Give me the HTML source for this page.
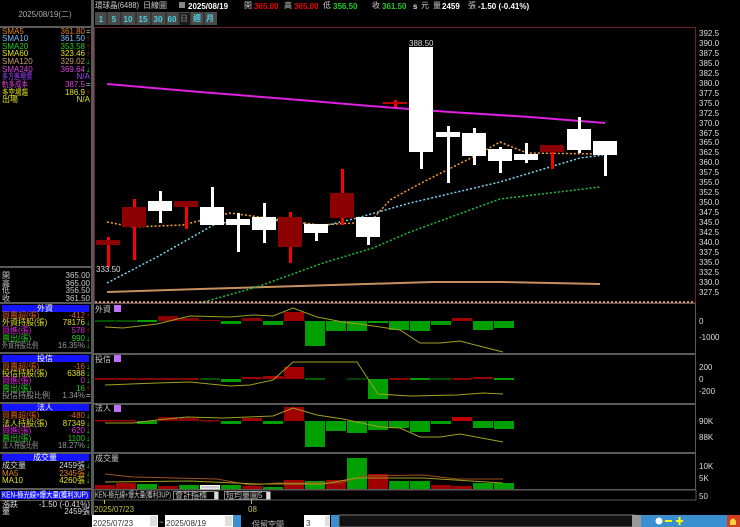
<!DOCTYPE html>
<html><head><meta charset="utf-8"><style>
html,body{margin:0;padding:0;background:#000;width:740px;height:527px;overflow:hidden}
svg{display:block}
text{font-family:"Liberation Sans","Noto Sans CJK TC",sans-serif;font-size:8px}
</style></head><body>
<svg width="740" height="527" viewBox="0 0 740 527" xmlns="http://www.w3.org/2000/svg">
<rect width="740" height="527" fill="#000"/>
<rect x="91" y="0" width="3" height="515" fill="#5a5a5a"/>
<rect x="0" y="26" width="91" height="2" fill="#5a5a5a"/>
<text x="45" y="17" fill="#aaa" text-anchor="middle" font-size="7">2025/08/19(二)</text>
<g font-size="6.5">
<text x="2" y="34" fill="#e08020">SMA5</text><text x="85" y="34" fill="#e08020" text-anchor="end">361.80</text><text x="86" y="34" fill="#ccc">=</text>
<text x="2" y="41" fill="#7ac0ff">SMA10</text><text x="85" y="41" fill="#7ac0ff" text-anchor="end">361.50</text><text x="86" y="41" fill="#f00">↑</text>
<text x="2" y="49" fill="#2c2">SMA20</text><text x="85" y="49" fill="#2c2" text-anchor="end">353.58</text><text x="86" y="49" fill="#f00">↑</text>
<text x="2" y="56" fill="#e0e020">SMA60</text><text x="85" y="56" fill="#e0e020" text-anchor="end">323.46</text><text x="86" y="56" fill="#f00">↑</text>
<text x="2" y="64" fill="#c8a070">SMA120</text><text x="85" y="64" fill="#c8a070" text-anchor="end">329.02</text><text x="86" y="64" fill="#0f0">↓</text>
<text x="2" y="72" fill="#e040e0">SMA240</text><text x="85" y="72" fill="#e040e0" text-anchor="end">369.64</text><text x="86" y="72" fill="#0f0">↓</text>
<text x="2" y="79" fill="#a040ff" font-size="6" textLength="30" lengthAdjust="spacingAndGlyphs">多方進場價</text><text x="90" y="79" fill="#a040ff" text-anchor="end">N/A</text>
<text x="2" y="87" fill="#e040e0" font-size="6" textLength="26" lengthAdjust="spacingAndGlyphs">軌多成本</text><text x="85" y="87" fill="#e040e0" text-anchor="end">387.5</text><text x="86" y="87" fill="#ccc">=</text>
<text x="2" y="95" fill="#e0e020" font-size="6" textLength="26" lengthAdjust="spacingAndGlyphs">多空場趨</text><text x="85" y="95" fill="#e0e020" text-anchor="end">186.9</text><text x="86" y="95" fill="#f00">↑</text>
<text x="2" y="102" fill="#e0e020" font-size="6">出場</text><text x="90" y="102" fill="#e0e020" text-anchor="end">N/A</text>
</g>
<rect x="0" y="266" width="91" height="2" fill="#5a5a5a"/>
<g fill="#ccc" font-size="6.5">
<text x="2" y="278">開</text><text x="90" y="278" text-anchor="end">365.00</text>
<text x="2" y="286">高</text><text x="90" y="286" text-anchor="end">365.00</text>
<text x="2" y="293">低</text><text x="90" y="293" text-anchor="end">356.50</text>
<text x="2" y="301">收</text><text x="90" y="301" text-anchor="end">361.50</text>
</g>
<g>
<rect x="0" y="302" width="91" height="2" fill="#5a5a5a"/>
<rect x="2" y="305" width="87" height="7" fill="#1414ff"/><text x="45" y="311" fill="#fff" text-anchor="middle" font-size="6">外資</text>
<rect x="0" y="352" width="91" height="2" fill="#5a5a5a"/>
<rect x="2" y="355" width="87" height="7" fill="#1414ff"/><text x="45" y="361" fill="#fff" text-anchor="middle" font-size="6">投信</text>
<rect x="0" y="402" width="91" height="2" fill="#5a5a5a"/>
<rect x="2" y="404" width="87" height="7" fill="#1414ff"/><text x="45" y="410" fill="#fff" text-anchor="middle" font-size="6">法人</text>
<rect x="0" y="452" width="91" height="2" fill="#5a5a5a"/>
<rect x="2" y="454" width="87" height="7" fill="#1414ff"/><text x="45" y="460" fill="#fff" text-anchor="middle" font-size="6">成交量</text>
<rect x="0" y="488" width="91" height="2" fill="#5a5a5a"/>
<rect x="1" y="491" width="89" height="8" fill="#1414ff"/><text x="2" y="497.5" fill="#fff" font-size="5.5" textLength="86" lengthAdjust="spacingAndGlyphs">KEN-極光線+爆大量(獲利3UP)</text>
<rect x="0" y="500" width="91" height="1" fill="#5a5a5a"/>
</g>
<g font-size="6">
<text x="2" y="318" fill="#e06020">買賣超(張)</text><text x="85" y="318" fill="#e06020" text-anchor="end">-412</text><text x="86" y="318" fill="#f00">↑</text>
<text x="2" y="325" fill="#e0e020">外資持股(張)</text><text x="85" y="325" fill="#e0e020" text-anchor="end">78176</text><text x="86" y="325" fill="#0f0">↓</text>
<text x="2" y="333" fill="#e020e0">買進(張)</text><text x="85" y="333" fill="#e020e0" text-anchor="end">578</text><text x="86" y="333" fill="#f00">↑</text>
<text x="2" y="341" fill="#2c2">賣出(張)</text><text x="85" y="341" fill="#2c2" text-anchor="end">990</text><text x="86" y="341" fill="#0f0">↓</text>
<text x="2" y="348" fill="#999" textLength="36" lengthAdjust="spacingAndGlyphs">外資持股比例</text><text x="85" y="348" fill="#999" text-anchor="end">16.35%</text><text x="86" y="348" fill="#0f0">↓</text>

<text x="2" y="369" fill="#e06020">買賣超(張)</text><text x="85" y="369" fill="#e06020" text-anchor="end">-16</text><text x="86" y="369" fill="#0f0">↓</text>
<text x="2" y="376" fill="#e0e020">投信持股(張)</text><text x="85" y="376" fill="#e0e020" text-anchor="end">6388</text><text x="86" y="376" fill="#0f0">↓</text>
<text x="2" y="383" fill="#e020e0">買進(張)</text><text x="85" y="383" fill="#e020e0" text-anchor="end">0</text><text x="86" y="383" fill="#0f0">↓</text>
<text x="2" y="391" fill="#2c2">賣出(張)</text><text x="85" y="391" fill="#2c2" text-anchor="end">16</text><text x="86" y="391" fill="#f00">↑</text>
<text x="2" y="398" fill="#999">投信持股比例</text><text x="85" y="398" fill="#999" text-anchor="end">1.34%</text><text x="86" y="398" fill="#ccc">=</text>

<text x="2" y="418" fill="#e06020">買賣超(張)</text><text x="85" y="418" fill="#e06020" text-anchor="end">-480</text><text x="86" y="418" fill="#0f0">↓</text>
<text x="2" y="426" fill="#e0e020">法人持股(張)</text><text x="85" y="426" fill="#e0e020" text-anchor="end">87349</text><text x="86" y="426" fill="#0f0">↓</text>
<text x="2" y="433" fill="#e020e0">買進(張)</text><text x="85" y="433" fill="#e020e0" text-anchor="end">620</text><text x="86" y="433" fill="#0f0">↓</text>
<text x="2" y="441" fill="#2c2">賣出(張)</text><text x="85" y="441" fill="#2c2" text-anchor="end">1100</text><text x="86" y="441" fill="#0f0">↓</text>
<text x="2" y="448" fill="#999" textLength="36" lengthAdjust="spacingAndGlyphs">法人持股比例</text><text x="85" y="448" fill="#999" text-anchor="end">18.27%</text><text x="86" y="448" fill="#0f0">↓</text>

<text x="2" y="468" fill="#ddd">成交量</text><text x="85" y="468" fill="#ddd" text-anchor="end">2459張</text><text x="86" y="468" fill="#0f0">↓</text>
<text x="2" y="476" fill="#e08020">MA5</text><text x="85" y="476" fill="#e08020" text-anchor="end">2345張</text><text x="86" y="476" fill="#0f0">↓</text>
<text x="2" y="483" fill="#e0e020">MA10</text><text x="85" y="483" fill="#e0e020" text-anchor="end">4260張</text><text x="86" y="483" fill="#0f0">↓</text>

<text x="2" y="507" fill="#ddd">漲跌</text><text x="90" y="507" fill="#ddd" text-anchor="end">-1.50 (-0.41%)</text>
<text x="2" y="514" fill="#ddd">量</text><text x="90" y="514" fill="#ddd" text-anchor="end">2459張</text>
</g>

<text x="95" y="8" fill="#ccc" font-size="6.5" textLength="44" lengthAdjust="spacingAndGlyphs">環球晶(6488)</text>
<text x="143" y="8" fill="#ccc" font-size="6.5">日線圖</text>
<rect x="179" y="2" width="6" height="6" fill="#888"/>
<text x="188" y="9" fill="#fff" font-size="9" font-weight="bold">2025/08/19</text>
<text x="244" y="8" fill="#ccc" font-size="6.5">開</text><text x="254" y="9" fill="#e00" font-size="9" font-weight="bold">365.00</text>
<text x="284" y="8" fill="#ccc" font-size="6.5">高</text><text x="294" y="9" fill="#e00" font-size="9" font-weight="bold">365.00</text>
<text x="323" y="8" fill="#ccc" font-size="6.5">低</text><text x="333" y="9" fill="#2c2" font-size="9" font-weight="bold">356.50</text>
<text x="372" y="8" fill="#ccc" font-size="6.5">收</text><text x="382" y="9" fill="#2c2" font-size="9" font-weight="bold">361.50</text>
<text x="413" y="9" fill="#ddd" font-size="8" font-weight="bold">s</text><text x="421" y="8" fill="#ccc" font-size="6.5">元</text>
<text x="433" y="8" fill="#ccc" font-size="6.5">量</text><text x="442" y="9" fill="#fff" font-size="9" font-weight="bold">2459</text><text x="468" y="8" fill="#ccc" font-size="6.5">張</text>
<text x="478" y="9" fill="#fff" font-size="9" font-weight="bold">-1.50 (-0.41%)</text>
<g font-size="8" font-weight="bold" fill="#4cd0e0">
<rect x="95" y="12" width="122" height="13" fill="#4a4a4a"/>
<g stroke="#222" stroke-width="1"><line x1="107" y1="12" x2="107" y2="25"/><line x1="121" y1="12" x2="121" y2="25"/><line x1="136" y1="12" x2="136" y2="25"/><line x1="151" y1="12" x2="151" y2="25"/><line x1="166" y1="12" x2="166" y2="25"/><line x1="179" y1="12" x2="179" y2="25"/><line x1="190" y1="12" x2="190" y2="25"/><line x1="204" y1="12" x2="204" y2="25"/></g>
<rect x="180" y="13" width="10" height="12" fill="#1a1a1a"/>
<text x="101" y="22" text-anchor="middle">1</text><text x="114" y="22" text-anchor="middle">5</text><text x="128" y="22" text-anchor="middle">10</text><text x="143" y="22" text-anchor="middle">15</text><text x="158" y="22" text-anchor="middle">30</text><text x="172" y="22" text-anchor="middle">60</text>
<text x="184" y="21" text-anchor="middle" fill="#666" font-size="6">日</text>
<text x="197" y="21" text-anchor="middle" font-size="7">週</text><text x="210" y="21" text-anchor="middle" font-size="7">月</text>
</g>
<rect x="94.5" y="27.5" width="601" height="275" fill="none" stroke="#6a2030"/>
<g fill="#ddd" font-size="8">
<text x="699" y="36">392.5</text><text x="699" y="46">390.0</text><text x="699" y="56">387.5</text><text x="699" y="66">385.0</text><text x="699" y="76">382.5</text><text x="699" y="86">380.0</text><text x="699" y="96">377.5</text><text x="699" y="106">375.0</text><text x="699" y="116">372.5</text><text x="699" y="126">370.0</text><text x="699" y="136">367.5</text><text x="699" y="145">365.0</text><text x="699" y="155">362.5</text><text x="699" y="165">360.0</text><text x="699" y="175">357.5</text><text x="699" y="185">355.0</text><text x="699" y="195">352.5</text><text x="699" y="205">350.0</text><text x="699" y="215">347.5</text><text x="699" y="225">345.0</text><text x="699" y="235">342.5</text><text x="699" y="245">340.0</text><text x="699" y="255">337.5</text><text x="699" y="265">335.0</text><text x="699" y="275">332.5</text><text x="699" y="285">330.0</text><text x="699" y="295">327.5</text>
</g>
<polyline points="107,84 200,92 300,100 370,106 450,112 530,117 605,123" fill="none" stroke="#e020e0" stroke-width="2"/>
<polyline points="107,292 200,289 300,286 400,283 433,282 500,282 600,284" fill="none" stroke="#c89060" stroke-width="2"/>
<polyline points="200,303 257,287 323,263 373,248 410,232 500,199 600,187" fill="none" stroke="#20c040" stroke-width="1.5" stroke-dasharray="2,2"/>
<polyline points="107,283 157,257 217,223 290,220 320,227 357,218 410,203 500,182 580,158 603,155" fill="none" stroke="#80d0f0" stroke-width="1.5" stroke-dasharray="2,2"/>
<polyline points="107,222 133,227 183,225 230,213 267,218 320,225 370,222 390,200 410,189 433,177 473,157 500,142 527,153 600,154" fill="none" stroke="#f0a040" stroke-width="1.5" stroke-dasharray="2,2"/>
<line x1="95" y1="302" x2="695" y2="302" stroke="#f0c080" stroke-width="1.5" stroke-dasharray="2,2"/>
<g>
<rect x="107" y="237" width="3" height="30" fill="#f00"/><rect x="96" y="240" width="24" height="5" fill="#8b0000"/>
<rect x="133" y="199" width="3" height="61" fill="#f00"/><rect x="122" y="207" width="24" height="20" fill="#8b0000"/>
<rect x="159" y="191" width="3" height="32" fill="#fff"/><rect x="148" y="201" width="24" height="10" fill="#fff"/>
<rect x="185" y="201" width="3" height="28" fill="#f00"/><rect x="174" y="201" width="24" height="6" fill="#8b0000"/>
<rect x="211" y="187" width="3" height="38" fill="#fff"/><rect x="200" y="207" width="24" height="18" fill="#fff"/>
<rect x="237" y="213" width="3" height="39" fill="#fff"/><rect x="226" y="219" width="24" height="6" fill="#fff"/>
<rect x="263" y="203" width="3" height="40" fill="#fff"/><rect x="252" y="217" width="24" height="13" fill="#fff"/>
<rect x="289" y="212" width="3" height="51" fill="#f00"/><rect x="278" y="217" width="24" height="30" fill="#8b0000"/>
<rect x="315" y="224" width="3" height="17" fill="#fff"/><rect x="304" y="224" width="24" height="9" fill="#fff"/>
<rect x="341" y="169" width="3" height="56" fill="#f00"/><rect x="330" y="193" width="24" height="25" fill="#8b0000"/>
<rect x="367" y="217" width="3" height="28" fill="#fff"/><rect x="356" y="217" width="24" height="20" fill="#fff"/>
<rect x="394" y="100" width="3" height="7" fill="#f00"/><rect x="383" y="102" width="24" height="2" fill="#c00000"/>
<rect x="420" y="47" width="3" height="122" fill="#fff"/><rect x="409" y="47" width="24" height="105" fill="#fff"/>
<rect x="447" y="126" width="3" height="57" fill="#fff"/><rect x="436" y="132" width="24" height="5" fill="#fff"/>
<rect x="473" y="128" width="3" height="37" fill="#fff"/><rect x="462" y="133" width="24" height="23" fill="#fff"/>
<rect x="499" y="147" width="3" height="26" fill="#fff"/><rect x="488" y="149" width="24" height="12" fill="#fff"/>
<rect x="525" y="143" width="3" height="20" fill="#fff"/><rect x="514" y="154" width="24" height="6" fill="#fff"/>
<rect x="551" y="145" width="3" height="24" fill="#f00"/><rect x="540" y="145" width="24" height="7" fill="#8b0000"/>
<rect x="578" y="117" width="3" height="36" fill="#fff"/><rect x="567" y="129" width="24" height="21" fill="#fff"/>
<rect x="604" y="141" width="3" height="35" fill="#fff"/><rect x="593" y="141" width="24" height="14" fill="#fff"/>
</g>
<text x="409" y="46" fill="#ddd" font-size="8">388.50</text>
<text x="96" y="272" fill="#ddd" font-size="8">333.50</text>

<g fill="#5a5a5a">
<rect x="94" y="303" width="602" height="1"/>
<rect x="94" y="353" width="602" height="2"/>
<rect x="94" y="403" width="602" height="2"/>
<rect x="94" y="452" width="602" height="2"/>
<rect x="94" y="489" width="602" height="1"/>
<rect x="695" y="303" width="1" height="197"/>
</g>
<g font-size="6" fill="#ccc">
<text x="95" y="312">外資</text><text x="95" y="362">投信</text><text x="95" y="411">法人</text><text x="95" y="461">成交量</text>
</g>
<g fill="#c070ff"><rect x="114" y="305" width="7" height="7"/><rect x="114" y="355" width="7" height="7"/><rect x="114" y="405" width="7" height="7"/></g>
<g fill="#ddd" font-size="8">
<text x="699" y="324">0</text><text x="699" y="340">-1000</text>
<text x="699" y="370">200</text><text x="699" y="382">0</text><text x="699" y="394">-200</text>
<text x="699" y="424">90K</text><text x="699" y="440">88K</text>
<text x="699" y="469">10K</text><text x="699" y="481">5K</text><text x="699" y="499">50</text>
</g>
<g>
<rect x="95" y="320" width="20" height="2" fill="#005000"/><rect x="116" y="320" width="20" height="2" fill="#005000"/><rect x="137" y="320" width="20" height="2" fill="#00a000"/>
<rect x="158" y="316" width="20" height="5" fill="#8b0000"/><rect x="179" y="318" width="20" height="3" fill="#8b0000"/><rect x="200" y="320" width="20" height="1" fill="#8b0000"/>
<rect x="221" y="321" width="20" height="3" fill="#00a000"/><rect x="242" y="318" width="20" height="3" fill="#8b0000"/><rect x="263" y="321" width="20" height="4" fill="#00a000"/>
<rect x="284" y="312" width="20" height="9" fill="#a00000"/><rect x="305" y="321" width="20" height="25" fill="#00a000"/><rect x="326" y="321" width="20" height="10" fill="#00a000"/>
<rect x="347" y="321" width="20" height="10" fill="#00a000"/><rect x="368" y="321" width="20" height="2" fill="#00a000"/><rect x="389" y="321" width="20" height="9" fill="#00a000"/>
<rect x="410" y="321" width="20" height="10" fill="#00a000"/><rect x="431" y="321" width="20" height="4" fill="#00a000"/><rect x="452" y="318" width="20" height="3" fill="#a00000"/>
<rect x="473" y="321" width="20" height="9" fill="#00a000"/><rect x="494" y="321" width="20" height="7" fill="#00a000"/>
</g>
<polyline points="105,327 123,328 157,324 190,316 230,317 253,315 273,316 293,308 317,317 343,322 367,325 400,330 420,343 440,343 460,341 483,347 503,352" fill="none" stroke="#a0a020" stroke-width="1"/>
<g>
<rect x="95" y="378" width="20" height="2" fill="#8b0000"/><rect x="116" y="378" width="20" height="2" fill="#8b0000"/><rect x="137" y="378" width="20" height="2" fill="#8b0000"/>
<rect x="158" y="378" width="20" height="2" fill="#8b0000"/><rect x="179" y="378" width="20" height="2" fill="#8b0000"/><rect x="200" y="378" width="20" height="2" fill="#005000"/>
<rect x="221" y="379" width="20" height="3" fill="#00a000"/><rect x="242" y="377" width="20" height="2" fill="#a00000"/><rect x="263" y="376" width="20" height="3" fill="#a00000"/>
<rect x="284" y="367" width="20" height="12" fill="#a00000"/><rect x="305" y="378" width="20" height="2" fill="#006000"/><rect x="347" y="378" width="20" height="2" fill="#004000"/>
<rect x="368" y="379" width="20" height="20" fill="#00a000"/><rect x="389" y="378" width="20" height="2" fill="#8b0000"/><rect x="410" y="378" width="20" height="2" fill="#00a000"/>
<rect x="431" y="378" width="20" height="2" fill="#005000"/><rect x="452" y="378" width="20" height="2" fill="#8b0000"/><rect x="473" y="377" width="20" height="2" fill="#a00000"/><rect x="494" y="378" width="20" height="2" fill="#00a000"/>
</g>
<polyline points="105,385 157,383 190,382 230,386 250,385 273,380 293,362 303,362 357,362 378,394 410,396 457,395 483,393 503,394" fill="none" stroke="#a0a020" stroke-width="1"/>
<g>
<rect x="95" y="420" width="20" height="1.5" fill="#a00000"/><rect x="116" y="420" width="20" height="1.5" fill="#a00000"/><rect x="137" y="421" width="20" height="3" fill="#00a000"/>
<rect x="158" y="417" width="20" height="4" fill="#8b0000"/><rect x="179" y="418" width="20" height="3" fill="#8b0000"/><rect x="200" y="420" width="20" height="1.5" fill="#8b0000"/>
<rect x="221" y="421" width="20" height="3" fill="#00a000"/><rect x="242" y="418" width="20" height="3" fill="#a00000"/><rect x="263" y="421" width="20" height="3" fill="#00a000"/>
<rect x="284" y="407" width="20" height="14" fill="#a00000"/><rect x="305" y="421" width="20" height="26" fill="#00a000"/><rect x="326" y="421" width="20" height="10" fill="#00a000"/>
<rect x="347" y="421" width="20" height="12" fill="#00a000"/><rect x="368" y="421" width="20" height="9" fill="#00a000"/><rect x="389" y="421" width="20" height="7" fill="#00a000"/>
<rect x="410" y="421" width="20" height="11" fill="#00a000"/><rect x="431" y="421" width="20" height="3" fill="#00a000"/><rect x="452" y="417" width="20" height="4" fill="#c00000"/>
<rect x="473" y="421" width="20" height="7" fill="#00a000"/><rect x="494" y="421" width="20" height="8" fill="#00a000"/>
</g>
<polyline points="105,423 133,423 157,420 187,417 223,418 273,416 293,408 317,415 343,419 380,427 400,428 420,437 440,437 460,434 503,442" fill="none" stroke="#a0a020" stroke-width="1"/>
<g>
<rect x="95" y="485" width="20" height="4" fill="#a00000"/><rect x="116" y="483" width="20" height="6" fill="#a00000"/><rect x="137" y="484" width="20" height="5" fill="#00a000"/>
<rect x="158" y="486" width="20" height="3" fill="#a00000"/><rect x="179" y="485" width="20" height="4" fill="#00a000"/><rect x="200.5" y="485.5" width="19" height="3.5" fill="#ccc" stroke="#fff"/>
<rect x="221" y="485" width="20" height="4" fill="#00a000"/><rect x="242" y="486" width="20" height="3" fill="#a00000"/><rect x="263" y="487" width="20" height="2" fill="#00a000"/>
<rect x="284" y="480" width="20" height="9" fill="#a00000"/><rect x="305" y="481" width="20" height="8" fill="#00a000"/><rect x="326" y="480" width="20" height="9" fill="#a00000"/>
<rect x="347" y="458" width="20" height="31" fill="#00a000"/><rect x="368" y="474" width="20" height="15" fill="#a00000"/><rect x="389" y="481" width="20" height="8" fill="#00a000"/>
<rect x="410" y="481" width="20" height="8" fill="#00a000"/><rect x="431" y="485" width="20" height="4" fill="#a00000"/><rect x="452" y="486" width="20" height="3" fill="#a00000"/>
<rect x="473" y="483" width="20" height="6" fill="#00a000"/><rect x="494" y="483" width="20" height="6" fill="#00a000"/>
</g>
<polyline points="105,474 133,477 217,479 250,485 277,483 340,483 363,476 423,475 457,479 503,479" fill="none" stroke="#a05020" stroke-width="1"/>
<polyline points="105,482 190,481 257,484 323,484 357,478 423,478 503,483" fill="none" stroke="#a0a020" stroke-width="1"/>
<rect x="94" y="490" width="602" height="10" fill="#000" stroke="#5a5a5a" stroke-width="1"/>
<text x="95" y="497.5" fill="#ccc" font-size="5.5" textLength="76" lengthAdjust="spacingAndGlyphs">KEN-極光線+爆大量(獲利3UP)</text>
<rect x="173.5" y="491.5" width="41" height="8" fill="#000" stroke="#888"/><text x="175" y="498" fill="#ccc" font-size="5.5">會計指標</text>
<rect x="214.5" y="491.5" width="4" height="8" fill="#ddd"/>
<rect x="224.5" y="491.5" width="42" height="8" fill="#000" stroke="#888"/><text x="226" y="498" fill="#ccc" font-size="5.5">短均量圖5</text>
<rect x="266.5" y="491.5" width="4" height="8" fill="#ddd"/>
<line x1="104.5" y1="500" x2="104.5" y2="504" stroke="#c0c040"/>
<line x1="251.5" y1="500" x2="251.5" y2="504" stroke="#c0c040"/>
<text x="94" y="512" fill="#c0c040" font-size="8">2025/07/23</text>
<text x="248" y="512" fill="#c0c040" font-size="8">08</text>
<rect x="92" y="515" width="66" height="12" fill="#fff"/><text x="93" y="526" fill="#333" font-size="11">2025/07/23</text>
<rect x="150" y="516" width="7" height="10" fill="#ddd"/>
<text x="159" y="525" fill="#ccc" font-size="9">~</text>
<rect x="165" y="515" width="68" height="12" fill="#fff"/><text x="166" y="526" fill="#333" font-size="11">2025/08/19</text>
<rect x="225" y="516" width="7" height="10" fill="#ddd"/>
<rect x="233" y="515" width="8" height="12" fill="#3a8fd0"/>
<text x="252" y="527" fill="#bbb" font-size="12">保留空間</text>
<rect x="304" y="515" width="26" height="12" fill="#fff"/><text x="306" y="526" fill="#333" font-size="11">3</text>
<rect x="325" y="516" width="5" height="10" fill="#ddd"/>
<rect x="331" y="515" width="8" height="12" fill="#3a8fd0"/>
<rect x="339" y="515" width="296" height="12" fill="#111" stroke="#777"/>
<rect x="632" y="515" width="9" height="12" fill="#999"/>
<rect x="641" y="515" width="86" height="12" fill="#3a8fd0"/>
<g fill="#fff">
<circle cx="659" cy="521" r="3.5"/>
<rect x="665" y="520" width="7" height="2" fill="#ff0"/>
<rect x="676" y="520" width="7" height="2" fill="#ff0"/><rect x="678.5" y="517" width="2" height="8" fill="#ff0"/>
</g>
<rect x="727" y="515" width="13" height="12" fill="#d04020"/>
<path d="M730 525 L730 521 Q733 516 736 521 L736 525 Z" fill="#ffd040"/>
</svg>
</body></html>
